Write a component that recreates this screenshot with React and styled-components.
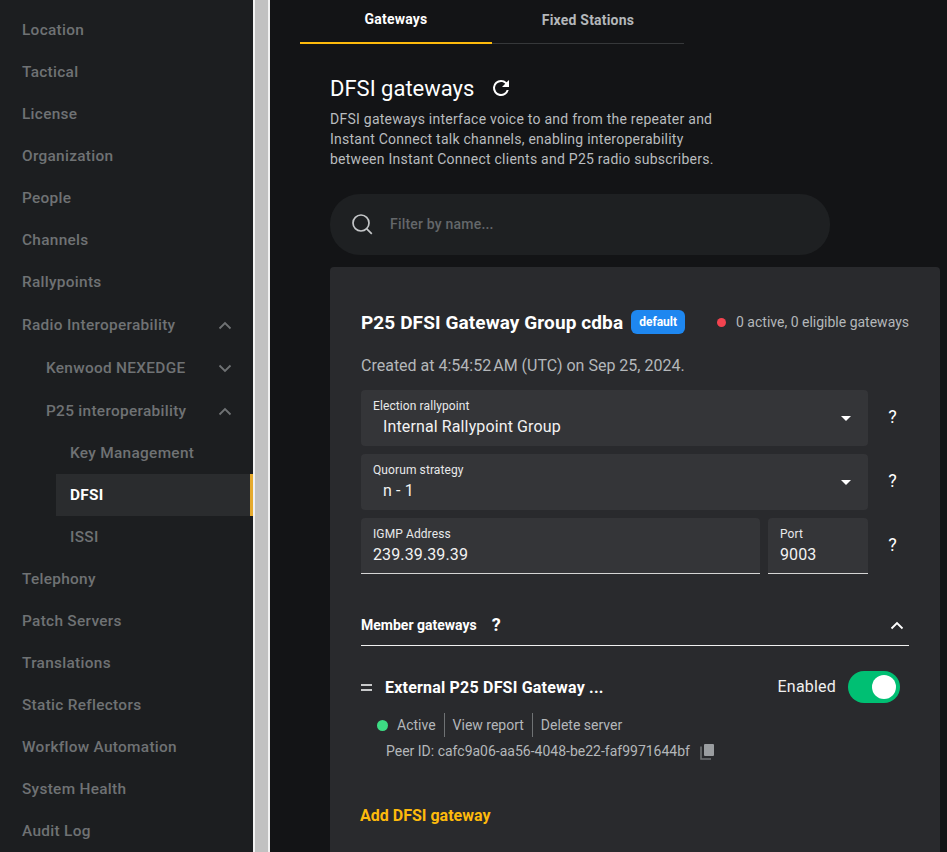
import React from "react";
import styled, { createGlobalStyle } from "styled-components";

const GlobalStyle = createGlobalStyle`
  html, body {
    margin: 0;
    padding: 0;
    height: 100%;
    overflow: hidden;
    background: #131416;
  }
  #root {
    height: 100%;
  }
  * {
    box-sizing: border-box;
  }
`;

const Page = styled.div`
  display: flex;
  width: 947px;
  height: 852px;
  overflow: hidden;
  font-family: Roboto, "Liberation Sans", sans-serif;
  background: #131416;
`;

const Sidebar = styled.nav`
  width: 253px;
  height: 852px;
  flex-shrink: 0;
  padding-top: 8px;
  background: #1c1e20;
`;

const NavRow = styled.div`
  display: flex;
  align-items: center;
  justify-content: space-between;
  height: ${(p) => (p.$expandable ? 43.33 : 42)}px;
  margin-left: ${(p) => p.$level * 24 + 8}px;
  padding-top: ${(p) => (p.$expandable ? 2 : 1)}px;
  padding-left: 14px;
  padding-right: 18px;
  color: ${(p) => (p.$active ? "#ffffff" : "#6f7274")};
  background: ${(p) => (p.$active ? "#2a2c2e" : "transparent")};
  border-right: 3px solid ${(p) => (p.$active ? "#e5aa2d" : "transparent")};
  font-size: 15.4px;
  font-weight: ${(p) => (p.$active ? 700 : 500)};
  letter-spacing: 0.3px;
`;

const Gutter = styled.div`
  width: 17px;
  height: 852px;
  flex-shrink: 0;
  background: #c1c1c1;
  border-left: 2px solid #f1f1f1;
  border-right: 2px solid #f1f1f1;
`;

const Main = styled.main`
  flex: 1;
  min-width: 0;
  padding-left: 30px;
`;

const Tabs = styled.div`
  display: flex;
  width: 384px;
  height: 44px;
  border-bottom: 1px solid #36383a;
`;

const Tab = styled.div`
  display: flex;
  align-items: center;
  justify-content: center;
  width: 192px;
  height: 44px;
  padding-bottom: 5px;
  color: ${(p) => (p.$active ? "#ffffff" : "#b4b7ba")};
  border-bottom: ${(p) => (p.$active ? "2px solid #fdba0c" : "none")};
  font-size: 14px;
  font-weight: 700;
  letter-spacing: 0.2px;
`;

const Content = styled.div`
  padding: 29px 0 0 30px;
`;

const HeadingRow = styled.div`
  display: flex;
  align-items: center;
  gap: 15px;
  height: 30px;
`;

const Heading = styled.h1`
  margin: 0;
  color: #ffffff;
  font-size: 22px;
  font-weight: 400;
`;

const Intro = styled.p`
  width: 390px;
  margin: 6px 0 0;
  color: #b9bcbf;
  font-size: 14px;
  line-height: 20px;
  letter-spacing: 0.25px;
`;

const SearchBar = styled.div`
  display: flex;
  align-items: center;
  gap: 17px;
  width: 500px;
  height: 61px;
  margin-top: 25px;
  padding: 0 0 1px 21px;
  border-radius: 30px;
  background: #1e2022;
  color: #64676a;
  font-size: 14px;
  font-weight: 500;
  letter-spacing: 0.2px;
`;

const Card = styled.section`
  width: 610px;
  height: 600px;
  margin-top: 12px;
  padding: 43px 31px 0;
  border-radius: 4px 4px 0 0;
  background: #292a2d;
`;

const CardHeader = styled.div`
  display: flex;
  align-items: center;
  height: 24px;
`;

const CardTitle = styled.h2`
  margin: 0;
  color: #ffffff;
  font-size: 19px;
  font-weight: 700;
  letter-spacing: 0.1px;
`;

const DefaultBadge = styled.span`
  display: flex;
  align-items: center;
  height: 24px;
  margin-left: 8px;
  padding: 0 8px;
  border-radius: 6px;
  background: #1e87f0;
  color: #ffffff;
  font-size: 12px;
  font-weight: 700;
`;

const GroupStatus = styled.div`
  display: flex;
  align-items: center;
  gap: 10px;
  margin-left: auto;
  color: #b4b7ba;
  font-size: 14px;
`;

const Dot = styled.span`
  width: ${(p) => p.$size}px;
  height: ${(p) => p.$size}px;
  flex-shrink: 0;
  border-radius: 50%;
  background: ${(p) => p.$color};
`;

const CreatedAt = styled.div`
  margin-top: 22px;
  margin-bottom: 14px;
  color: #b4b7ba;
  font-size: 16px;
  line-height: 20px;
`;

const FieldRow = styled.div`
  display: flex;
  align-items: center;
  gap: 8px;
  margin-bottom: 8px;
`;

const Field = styled.div`
  position: relative;
  flex: ${(p) => p.$flex || "none"};
  width: ${(p) => (p.$width ? `${p.$width}px` : "auto")};
  height: 56px;
  padding: 9px 12px 0;
  border-radius: 4px 4px ${(p) => (p.$input ? "0 0" : "4px 4px")};
  background: #343538;
  border-bottom: ${(p) => (p.$input ? "1px solid #d5d5d5" : "none")};
`;

const FieldLabel = styled.div`
  color: #e8e9ea;
  font-size: 12px;
  line-height: 15px;
  letter-spacing: 0.1px;
`;

const FieldValue = styled.div`
  margin-top: 3px;
  padding-left: ${(p) => (p.$select ? 10 : 0)}px;
  color: #f2f2f2;
  font-size: 16px;
  line-height: 20px;
  letter-spacing: 0.12px;
`;

const Caret = styled.span`
  position: absolute;
  top: 26px;
  right: 17px;
  width: 0;
  height: 0;
  border-left: 5px solid transparent;
  border-right: 5px solid transparent;
  border-top: 5px solid #ffffff;
`;

const Help = styled.span`
  width: 33px;
  padding-bottom: 4px;
  color: #ffffff;
  font-size: 18px;
  font-weight: 400;
  text-align: center;
`;

const FieldStack = styled.div`
  width: 548px;
`;

const SectionHeader = styled.div`
  display: flex;
  align-items: center;
  height: 44px;
  margin-top: 28px;
  padding-top: 2px;
  padding-right: 5px;
  border-bottom: 1px solid #f0f0f0;
`;

const SectionTitle = styled.span`
  color: #ffffff;
  font-size: 14px;
  font-weight: 700;
`;

const SectionHelp = styled.span`
  margin-left: 15px;
  color: #ffffff;
  font-size: 18px;
  font-weight: 700;
`;

const Collapse = styled.span`
  display: flex;
  margin-left: auto;
`;

const GatewayRow = styled.div`
  display: flex;
  align-items: center;
  height: 32px;
  margin-top: 25px;
  padding-right: 9px;
`;

const DragHandle = styled.span`
  width: 11px;
  height: 7px;
  border-top: 2px solid #c8c9ca;
  border-bottom: 2px solid #c8c9ca;
`;

const GatewayName = styled.span`
  margin-left: 13px;
  color: #ffffff;
  font-size: 16px;
  font-weight: 700;
  letter-spacing: 0.2px;
`;

const ToggleLabel = styled.span`
  margin-left: auto;
  padding-bottom: 2px;
  color: #f0f0f0;
  font-size: 16px;
  letter-spacing: 0.2px;
`;

const Toggle = styled.span`
  display: flex;
  align-items: center;
  justify-content: flex-end;
  width: 52px;
  height: 32px;
  margin-left: 12px;
  padding-right: 4px;
  border-radius: 16px;
  background: #00bf73;
`;

const ToggleKnob = styled.span`
  width: 24px;
  height: 24px;
  border-radius: 50%;
  background: #ffffff;
`;

const LinksRow = styled.div`
  display: flex;
  align-items: center;
  height: 24px;
  margin-top: 10px;
  padding-left: 16px;
  color: #b4b7ba;
  font-size: 14px;
`;

const ActiveLabel = styled.span`
  margin-left: 9px;
`;

const LinkItem = styled.span`
  display: flex;
  align-items: center;
  height: 24px;
  margin-left: 8px;
  padding-left: 8px;
  border-left: 1px solid #6f7274;
`;

const PeerRow = styled.div`
  display: flex;
  align-items: center;
  gap: 10px;
  height: 24px;
  margin-top: 2px;
  padding-left: 25px;
  color: #b4b7ba;
  font-size: 14px;
`;

const AddLink = styled.div`
  margin: 43px 0 0 -1px;
  color: #fdba0c;
  font-size: 16px;
  font-weight: 700;
`;

const navItems = [
  { label: "Location", level: 0 },
  { label: "Tactical", level: 0 },
  { label: "License", level: 0 },
  { label: "Organization", level: 0 },
  { label: "People", level: 0 },
  { label: "Channels", level: 0 },
  { label: "Rallypoints", level: 0 },
  { label: "Radio Interoperability", level: 0, chevron: "up" },
  { label: "Kenwood NEXEDGE", level: 1, chevron: "down" },
  { label: "P25 interoperability", level: 1, chevron: "up" },
  { label: "Key Management", level: 2 },
  { label: "DFSI", level: 2, active: true },
  { label: "ISSI", level: 2 },
  { label: "Telephony", level: 0 },
  { label: "Patch Servers", level: 0 },
  { label: "Translations", level: 0 },
  { label: "Static Reflectors", level: 0 },
  { label: "Workflow Automation", level: 0 },
  { label: "System Health", level: 0 },
  { label: "Audit Log", level: 0 },
];

const Chevron = ({ dir, color }) => (
  <svg width="14" height="14" viewBox="0 0 14 14" fill="none">
    <path
      d={dir === "up" ? "M1.5 10.5L7 5l5.5 5.5" : "M1.5 4.5L7 10l5.5-5.5"}
      stroke={color}
      strokeWidth="1.8"
    />
  </svg>
);

const RefreshIcon = () => (
  <svg width="24" height="24" viewBox="0 0 24 24" fill="#ffffff">
    <path d="M17.65 6.35A7.96 7.96 0 0 0 12 4a8 8 0 1 0 7.73 10h-2.08A6 6 0 1 1 12 6c1.66 0 3.14.69 4.22 1.78L13 11h7V4l-2.35 2.35z" />
  </svg>
);

const SearchIcon = () => (
  <svg width="22" height="22" viewBox="0 0 22 22" fill="none" stroke="#c4c6c8" strokeWidth="1.7">
    <circle cx="10" cy="10" r="8" />
    <path d="M15.8 15.8l5 5" />
  </svg>
);

const CopyIcon = () => (
  <svg width="16" height="17" viewBox="0 0 16 17">
    <path d="M1 3.5v12.5h10" fill="none" stroke="#6f7274" strokeWidth="1.6" />
    <rect x="4" y="1" width="10" height="12" rx="1" fill="#9a9da0" />
  </svg>
);

const App = () => {
  return (
    <Page>
      <GlobalStyle />
      <Sidebar>
        {navItems.map((item) => (
          <NavRow
            key={item.label}
            $level={item.level}
            $active={item.active}
            $expandable={!!item.chevron}
          >
            {item.label}
            {item.chevron && <Chevron dir={item.chevron} color="#6f7274" />}
          </NavRow>
        ))}
      </Sidebar>
      <Gutter />
      <Main>
        <Tabs>
          <Tab $active>Gateways</Tab>
          <Tab>Fixed Stations</Tab>
        </Tabs>
        <Content>
          <HeadingRow>
            <Heading>DFSI gateways</Heading>
            <RefreshIcon />
          </HeadingRow>
          <Intro>
            DFSI gateways interface voice to and from the repeater and Instant
            Connect talk channels, enabling interoperability between Instant
            Connect clients and P25 radio subscribers.
          </Intro>
          <SearchBar>
            <SearchIcon />
            Filter by name...
          </SearchBar>
          <Card>
            <CardHeader>
              <CardTitle>P25 DFSI Gateway Group cdba</CardTitle>
              <DefaultBadge>default</DefaultBadge>
              <GroupStatus>
                <Dot $size={9} $color="#f3434f" />0 active, 0 eligible gateways
              </GroupStatus>
            </CardHeader>
            <CreatedAt>Created at 4:54:52{"\u202f"}AM (UTC) on Sep 25, 2024.</CreatedAt>
            <FieldStack>
              <FieldRow>
                <Field $flex="1">
                  <FieldLabel>Election rallypoint</FieldLabel>
                  <FieldValue $select>Internal Rallypoint Group</FieldValue>
                  <Caret />
                </Field>
                <Help>?</Help>
              </FieldRow>
              <FieldRow>
                <Field $flex="1">
                  <FieldLabel>Quorum strategy</FieldLabel>
                  <FieldValue $select>n - 1</FieldValue>
                  <Caret />
                </Field>
                <Help>?</Help>
              </FieldRow>
              <FieldRow>
                <Field $flex="1" $input>
                  <FieldLabel>IGMP Address</FieldLabel>
                  <FieldValue>239.39.39.39</FieldValue>
                </Field>
                <Field $width={100} $input>
                  <FieldLabel>Port</FieldLabel>
                  <FieldValue>9003</FieldValue>
                </Field>
                <Help>?</Help>
              </FieldRow>
            </FieldStack>
            <SectionHeader>
              <SectionTitle>Member gateways</SectionTitle>
              <SectionHelp>?</SectionHelp>
              <Collapse>
                <Chevron dir="up" color="#ffffff" />
              </Collapse>
            </SectionHeader>
            <GatewayRow>
              <DragHandle />
              <GatewayName>External P25 DFSI Gateway ...</GatewayName>
              <ToggleLabel>Enabled</ToggleLabel>
              <Toggle>
                <ToggleKnob />
              </Toggle>
            </GatewayRow>
            <LinksRow>
              <Dot $size={11} $color="#3ddc84" />
              <ActiveLabel>Active</ActiveLabel>
              <LinkItem>View report</LinkItem>
              <LinkItem>Delete server</LinkItem>
            </LinksRow>
            <PeerRow>
              Peer ID: cafc9a06-aa56-4048-be22-faf9971644bf
              <CopyIcon />
            </PeerRow>
            <AddLink>Add DFSI gateway</AddLink>
          </Card>
        </Content>
      </Main>
    </Page>
  );
};

export default App;
